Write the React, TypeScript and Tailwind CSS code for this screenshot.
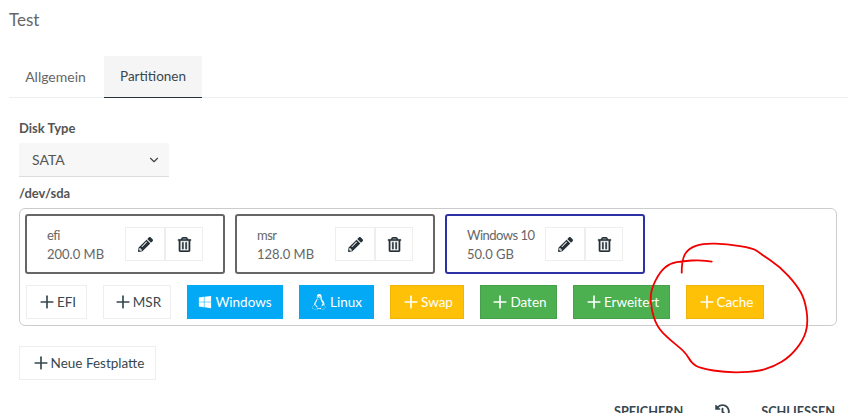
import { ChevronDown, Plus } from 'lucide-react';
import { FaHistory, FaLinux, FaPencilAlt, FaRegTrashAlt, FaWindows } from 'react-icons/fa';
import type { ReactNode } from 'react';

const scribble: [number, number][] = [
  [681.7, 272.7], [681.7, 260], [688.3, 248.3], [703.3, 243.3], [726.7, 244], [753.3, 248.3], [760, 253.3],
  [780, 266.7], [796.7, 285], [805, 300], [808.3, 323.3], [803.3, 340], [790, 356.7], [773.3, 366.7],
  [756.7, 371.7], [726.7, 372.7], [700, 368.3], [691.7, 363.3], [685, 351.7], [670, 340], [656.7, 326.7],
  [650.7, 306.7], [650.7, 290], [660, 271.7], [670, 263.3], [683.3, 261], [700, 260], [711.7, 261.7],
];

const scribblePath = () => {
  let d = `M${scribble[0][0]} ${scribble[0][1]}`;
  for (let i = 1; i < scribble.length - 1; i++) {
    const [x, y] = scribble[i];
    const [nx, ny] = scribble[i + 1];
    d += ` Q${x} ${y} ${(x + nx) / 2} ${(y + ny) / 2}`;
  }
  const last = scribble[scribble.length - 1];
  return `${d} L${last[0]} ${last[1]}`;
};

const PartitionCard = ({ name, size, active }: { name: string; size: string; active?: boolean }) => (
  <div
    className={`flex h-[60px] w-[200px] items-center justify-between rounded-[3px] border-2 pl-5 pr-[20px] ${
      active ? 'border-[#2e31a6]' : 'border-[#666666]'
    }`}
  >
    <div className="whitespace-nowrap pt-[2px] text-[13px] leading-[19px] text-[#666666]">
      <div className="tracking-[-0.5px]">{name}</div>
      <div>{size}</div>
    </div>
    <div className="flex">
      <button className="flex h-[34px] w-[40px] items-center justify-center border border-[#eeeeee] text-[#263238]">
        <FaPencilAlt size={15} />
      </button>
      <button className="flex h-[34px] w-[38px] items-center justify-center border border-[#eeeeee] text-[#263238]">
        <FaRegTrashAlt size={15} stroke="currentColor" strokeWidth={12} />
      </button>
    </div>
  </div>
);

const AddButton = ({ className, icon, label }: { className: string; icon?: ReactNode; label: string }) => (
  <button className={`flex h-[34px] items-center justify-center border text-[13.5px] ${className}`}>
    {icon ?? <Plus size={20} strokeWidth={2} />}
    {label}
  </button>
);

const plain = 'border-[#eeeeee] bg-white text-[#37474f]';
const blue = 'border-[#03a9f4] bg-[#03a9f4] text-white';
const yellow = 'border-[#efb30a] bg-[#ffc107] text-white';
const green = 'border-[#47a04b] bg-[#4caf50] text-white';

export default function App() {
  return (
    <div className="relative h-[413px] w-[848px] overflow-hidden bg-white font-['Lato',sans-serif]">
      <h1 className="pl-[9px] pt-[10px] text-[17px] leading-[20px] text-[#666666]">Test</h1>

      <div className="ml-[9px] mt-[26px] flex h-[42px] border-b border-[#eeeeee] text-[14px]">
        <div className="flex w-[95px] items-center justify-center pr-[2px] text-[#666666]">Allgemein</div>
        <div className="-mb-px flex w-[98px] items-center justify-center border-b border-[#263238] bg-[#f5f5f5] text-[13.5px] text-[#37474f]">
          Partitionen
        </div>
      </div>

      <div className="px-[19px]">
        <div className="mt-[21px] text-[13px] font-bold leading-[18px] text-[#555555]">Disk Type</div>
        <div className="mt-[6px] flex h-[34px] w-[150px] items-center justify-between border-b border-[#dddddd] bg-[#f7f7f7] pl-[13px] pr-2 text-[14px] text-[#555555]">
          SATA
          <ChevronDown size={14} className="text-[#444444]" />
        </div>
        <div className="mt-[7px] text-[13px] font-bold leading-[18px] text-[#555555]">/dev/sda</div>

        <div className="mt-[6px] h-[118px] w-[818px] rounded-[6px] border border-[#cccccc] pl-[5px] pt-[5px]">
          <div className="flex gap-[10px]">
            <PartitionCard name="efi" size="200.0 MB" />
            <PartitionCard name="msr" size="128.0 MB" />
            <PartitionCard name="Windows 10" size="50.0 GB" active />
          </div>
          <div className="ml-px mt-[11px] flex gap-4">
            <AddButton className={`w-[61px] ${plain}`} label="EFI" />
            <AddButton className={`w-[68px] ${plain}`} label="MSR" />
            <AddButton className={`w-[96px] ${blue}`} icon={<FaWindows size={14} className="mr-[3px]" />} label="Windows" />
            <AddButton className={`w-[75px] ${blue}`} icon={<FaLinux size={16} className="mr-[3px]" />} label="Linux" />
            <AddButton className={`w-[74px] ${yellow}`} label="Swap" />
            <AddButton className={`w-[77px] ${green}`} label="Daten" />
            <AddButton className={`w-[97px] ${green}`} label="Erweitert" />
            <AddButton className={`w-[78px] ${yellow}`} label="Cache" />
          </div>
        </div>

        <AddButton className={`mt-[20px] w-[137px] ${plain}`} label="Neue Festplatte" />
      </div>

      <div className="mt-[22px] flex items-center justify-end pr-[13px] text-[12.7px] font-bold text-[#37474f]">
        <span>SPEICHERN</span>
        <FaHistory size={15} className="ml-[32px] mr-[31px]" />
        <span>SCHLIESSEN</span>
      </div>

      {/* red marker circle drawn over the screenshot */}
      <svg className="absolute left-0 top-0 h-[413px] w-[848px]" viewBox="0 0 848 413" fill="none">
        <path d={scribblePath()} stroke="#f00000" strokeWidth={1.8} strokeLinecap="round" />
      </svg>
    </div>
  );
}
